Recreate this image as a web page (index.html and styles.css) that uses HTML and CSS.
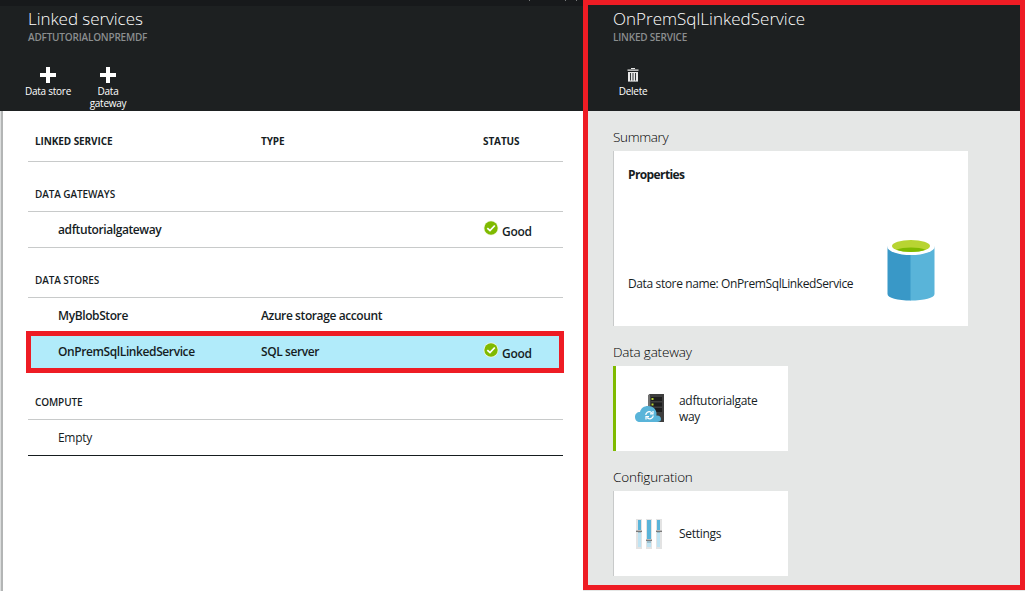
FILE: index.html
```html
<!DOCTYPE html>
<html lang="en">
<head>
<meta charset="utf-8">
<title>Linked services</title>
<link rel="stylesheet" href="styles.css">
</head>
<body>
<svg class="defs" width="0" height="0" aria-hidden="true">
  <symbol id="good" viewBox="0 0 16 16">
    <circle cx="8" cy="8" r="7.5" fill="#f1f8df"/>
    <circle cx="8" cy="8" r="6.7" fill="#7fba00"/>
    <path d="M4.3 8.1 7 10.6 11.8 5.5" fill="none" stroke="#fff" stroke-width="1.8"/>
  </symbol>
  <symbol id="plus" viewBox="0 0 16 16">
    <path d="M6 0h4v6h6v4h-6v6H6v-6H0V6h6z" fill="#fff"/>
  </symbol>
</svg>
<div class="portal">
  <section class="blade list-blade">
    <header class="head">
      <svg class="strip" width="60" height="2" viewBox="0 0 60 2"><path d="M6 0h1v1H6zM42 0h1v1h-1zM53 0h1v1h-1z" fill="#77797a"/></svg>
      <h1 class="title t-list">Linked services</h1>
      <p class="subtitle s-list">ADFTUTORIALONPREMDF</p>
      <nav class="commands">
        <a class="command"><svg class="plus"><use href="#plus"/></svg><span>Data store</span></a>
        <a class="command"><svg class="plus"><use href="#plus"/></svg><span>Data<br>gateway</span></a>
      </nav>
    </header>
    <div class="table">
      <div class="row columns"><span>LINKED SERVICE</span><span>TYPE</span><span>STATUS</span></div>
      <div class="group">DATA GATEWAYS</div>
      <div class="row item lined"><span>adftutorialgateway</span><span></span><span class="status"><svg><use href="#good"/></svg><b>Good</b></span></div>
      <div class="group">DATA STORES</div>
      <div class="row item"><span>MyBlobStore</span><span>Azure storage account</span><span></span></div>
      <div class="row item selected"><span class="selected-name">OnPremSqlLinkedService</span><span>SQL server</span><span class="status"><svg><use href="#good"/></svg><b>Good</b></span></div>
      <div class="group after-selected">COMPUTE</div>
      <div class="row item last"><span>Empty</span></div>
    </div>
  </section>
  <section class="blade detail-blade">
    <header class="head">
      <h1 class="title t-detail">OnPremSqlLinkedService</h1>
      <p class="subtitle s-detail">LINKED SERVICE</p>
      <nav class="commands">
        <a class="command"><svg class="trash" viewBox="0 0 12 16"><path d="M4 1.5h4M.5 3.2h11" stroke="#e8e8e8" stroke-width="1.2"/><path d="M1 5h10v9.6H1z" fill="#e8e8e8"/><path d="M3.5 6v7.5M6 6v7.5M8.5 6v7.5" stroke="#34383a" stroke-width="1"/></svg><span>Delete</span></a>
      </nav>
    </header>
    <div class="content">
      <h2 class="label l-summary">Summary</h2>
      <div class="card summary">
        <div class="props"><h3>Properties</h3><p>Data store name: OnPremSqlLinkedService</p></div>
        <svg class="database" width="48" height="61" viewBox="0 0 48 61">
          <path d="M.5 6v48c0 4 10 6.500 23.500 6.500V6z" fill="#3998c7"/>
          <path d="M23.500 6v54.500C37 60.500 47.500 58 47.500 54V6z" fill="#59b4d9"/>
          <ellipse cx="24" cy="6.500" rx="23.800" ry="8.600" fill="#fff"/>
          <ellipse cx="24" cy="6" rx="19" ry="6" fill="#b8d432"/>
          <path d="M9.500 9.800Q15 7.500 24 7.500t14.500 2.300Q33 12 24 12T9.500 9.800z" fill="#7fba00"/>
        </svg>
      </div>
      <h2 class="label l-gateway">Data gateway</h2>
      <div class="card tile gateway">
        <svg width="30" height="30" viewBox="0 0 30 30">
          <path d="M14 0h15v28H14z" fill="#3e3e3e"/><path d="M13 1l2-1v28h-2z" fill="#707070"/>
          <path d="M16 3h11v4H16zM16 8.500h11v4H16zM16 14h11v4H16z" fill="#1e1e1e"/>
          <path d="M16.500 4h2v2h-2zM16.500 9.500h2v2h-2z" fill="#b8d432"/>
          <path d="M5 28C2 28 0 26 0 23s2-5 5-5c1-4 4-6 8-6 5 0 8 3 8.500 7 0 1 0 2-.2 2.500 3-.3 4.700 1.300 4.700 3.500S24.500 28 22 28z" fill="#59b4d9"/>
          <path d="M10.800 21c0-2 2-3.800 4.500-3.200l1.500 1M18 17v2.800h-3M18.200 21.500c0 2-2 3.800-4.500 3.200l-1.500-1M11 25.500v-2.800h3" fill="none" stroke="#fff" stroke-width="1.200"/>
        </svg>
        <span>adftutorialgate<br>way</span>
      </div>
      <h2 class="label l-config">Configuration</h2>
      <div class="card tile settings">
        <svg width="30" height="30" viewBox="0 0 30 30" shape-rendering="crispEdges">
          <path d="M0 0h6v30H0zM10 0h6v30h-6zM20 0h6v30h-6z" fill="#e3e3e3"/>
          <path d="M2 1h3v10H2zM11 1h4v19h-4zM21 1h3v10h-3z" fill="#59b4d9"/>
          <path d="M2 14h3v14H2zM11 24h4v4h-4zM21 14h3v14h-3z" fill="#bfe3f2"/>
          <path d="M0 11h6v1H0zM10 20h6v1h-6zM20 11h6v1h-6z" fill="#bbb"/>
          <path d="M0 12h6v1H0zM10 21h6v1h-6zM20 12h6v1h-6z" fill="#7a7a7a"/>
          <path d="M2 13h3v1H2zM11 22h4v2h-4zM21 13h3v1h-3z" fill="#9cbfce"/>
        </svg>
        <span class="settings-name">Settings</span>
      </div>
    </div>
  </section>
</div>
</body>
</html>
```
FILE: styles.css
```css
* { box-sizing: border-box; }
body, h1, h2, h3, p { margin: 0; }
body { width: 1025px; height: 591px; overflow: hidden; background: #e5e7e6; font: 12px/16px "Open Sans", "Noto Sans", sans-serif; color: #161d1f; }
.defs { display: block; }
.portal { display: grid; grid-template-columns: 583px 442px; }
.blade { min-width: 0; }
.list-blade { height: 591px; background: #fff; }
.list-blade .head { height: 111px; padding: 8px 0 0 28px; background: linear-gradient(#17191b 6px, #1d2021 6px); }
.detail-blade { height: 590px; border: 5px solid #ee1c24; background: #e5e7e6; }
.detail-blade .head { height: 106px; padding: 3px 0 0 25px; background: #1d2021; }
.head { position: relative; color: #fff; }
.strip { position: absolute; left: 523px; top: 0; }
.title { font-size: 17px; line-height: 22px; font-weight: 300; white-space: nowrap; }
.t-list { letter-spacing: -0.05px; }
.t-detail { letter-spacing: 0.02px; }
.subtitle { margin-top: 1px; font-size: 10px; line-height: 12px; font-weight: 600; color: #8b8e8f; letter-spacing: -0.2px; }
.s-detail { letter-spacing: -0.2px; }
.commands { display: flex; margin: 24px 0 0 -10px; }
.command { display: flex; flex-direction: column; align-items: center; width: 60px; font-size: 10px; line-height: 12px; text-align: center; letter-spacing: -0.25px; }
.plus { width: 16px; height: 16px; margin-bottom: 2px; }
.trash { width: 12px; height: 16px; margin-bottom: 2px; }
.table { height: 480px; padding: 0 20px 0 25px; border-left: 3px solid #b5b7b7; border-image: linear-gradient(90deg, #dcdede 1px, #b3b5b5 1px) 3; }
.row { display: grid; grid-template-columns: 225px 222px 1fr; align-items: center; }
.columns { height: 51px; padding: 9px 0 0 7px; border-bottom: 1px solid #c8caca; font-size: 10px; font-weight: 700; letter-spacing: -0.1px; }
.columns { grid-template-columns: 226px 222px 1fr; }
.group { height: 50px; padding: 24px 0 0 7px; border-bottom: 1px solid #c8caca; font-size: 10px; line-height: 16px; font-weight: 600; letter-spacing: -0.1px; }
.item { height: 36px; padding-left: 30px; grid-template-columns: 203px 222px 1fr; font-weight: 600; letter-spacing: -0.4px; }
.lined { border-bottom: 1px solid #c8caca; }
.status { display: flex; gap: 3px; letter-spacing: -0.25px; }
.status svg { width: 16px; height: 16px; margin-top: -1px; }
.status b { font-weight: 600; padding-top: 3px; }
.lined .status { padding-top: 2px; }
.selected { height: 42px; margin: -3px -1px 0 -2px; padding-left: 27px; border: 5px solid #ee1c24; background: #b1ebfa; }
.after-selected { height: 47px; padding-top: 21px; }
.last { border-bottom: 1px solid #161d1f; font-weight: 400; letter-spacing: -0.3px; }
.content { padding: 17px 0 0 25px; }
.label { height: 23px; font-size: 13.5px; line-height: 18px; font-weight: 300; color: #000; letter-spacing: -0.35px; }
.l-gateway, .l-config { letter-spacing: -0.2px; }
.card { background: #fff; border-left: 1px solid #c8caca; }
.summary { width: 355px; height: 175px; display: flex; justify-content: space-between; padding: 16px 33px 0 14px; margin-bottom: 17px; }
.props h3 { font-size: 12px; line-height: 16px; font-weight: 700; letter-spacing: -0.6px; }
.props p { margin-top: 93px; white-space: nowrap; letter-spacing: -0.38px; }
.database { margin-top: 73px; }
.tile { width: 175px; height: 85px; display: flex; align-items: center; gap: 13px; padding-left: 22px; letter-spacing: -0.3px; }
.gateway { border-left: 3px solid #7fba00; padding-left: 19px; gap: 14px; margin-bottom: 17px; }
```
